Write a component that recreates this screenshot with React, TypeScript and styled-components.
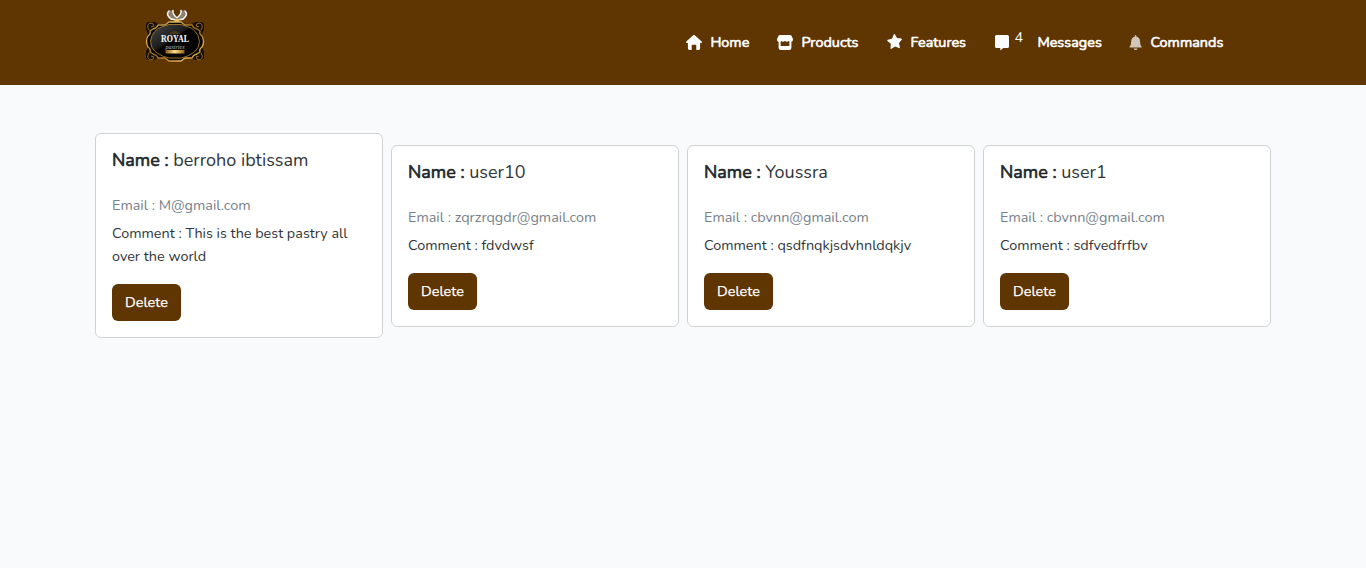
import React from "react";
import styled, { createGlobalStyle } from "styled-components";

const GlobalStyle = createGlobalStyle`
  *, *::before, *::after { box-sizing: border-box; }
  body {
    margin: 0;
    background: #f8fafc;
    color: #30353a;
    font-family: Nunito, Lato, "Open Sans", sans-serif;
    font-size: 14.4px;
    line-height: 1.6;
  }
`;

const Header = styled.header`
  height: 85px;
  padding: 0 142px 0 144px;
  display: flex;
  justify-content: space-between;
  background: #5f3502;
`;

const Brand = styled.a`
  display: block;
  padding-top: 8px;
  line-height: 0;
`;

const Nav = styled.nav`
  display: flex;
  align-items: center;
  height: 86px;
`;

const NavLink = styled.a<{ $width: number }>`
  display: flex;
  align-items: center;
  width: ${(p) => p.$width}px;
  color: #fff;
  text-decoration: none;
`;

const NavIcon = styled.svg<{ $width: number }>`
  width: ${(p) => p.$width}px;
  height: 16px;
  flex: none;
  overflow: visible;
`;

const NavLabel = styled.span`
  margin-left: 8.4px;
  white-space: nowrap;
  -webkit-text-stroke: 0.6px currentColor;
`;

const Count = styled.span`
  width: 8px;
  margin: 0 6.6px 10px 5.400px;
`;

const Cards = styled.main`
  display: flex;
  align-items: center;
  gap: 8px;
  padding: 48.25px 95px 0;
`;

const Card = styled.article`
  width: 288px;
  padding: 16px;
  border: 1px solid #d0d2d4;
  border-radius: 6px;
  background: #fff;
`;

const Title = styled.h5`
  margin: 0 0 25.3px;
  font-size: 18px;
  font-weight: 400;
  line-height: 21.6px;
  white-space: nowrap;
`;

const Strong = styled.span`
  color: #212529;
  -webkit-text-stroke: 0.6px currentColor;
`;

const Email = styled.h6`
  margin: 0 0 7.7px;
  color: #78818a;
  font-size: 14.4px;
  font-weight: 400;
  line-height: 17.28px;
`;

const Comment = styled.p`
  margin: 0 0 16px;
`;

const DeleteButton = styled.button`
  display: block;
  width: 69px;
  height: 37px;
  padding: 0;
  border: 0;
  border-radius: 6px;
  background: #5f3502;
  color: #fff;
  font: inherit;
  -webkit-text-stroke: 0.25px currentColor;
`;

const Logo = () => (
  <svg width="62" height="56" viewBox="0 0 62 56" role="img" aria-label="Royal Pastries">
    <defs>
      <linearGradient id="gold" x1="0" y1="0" x2="1" y2="1">
        <stop offset="0" stopColor="#8b5d1d" />
        <stop offset=".25" stopColor="#e0b65b" />
        <stop offset=".5" stopColor="#996316" />
        <stop offset=".8" stopColor="#e2b254" />
        <stop offset="1" stopColor="#8e5d22" />
      </linearGradient>
      <linearGradient id="bar">
        <stop offset="0" stopColor="#8a5a16" />
        <stop offset=".5" stopColor="#ffe08c" />
        <stop offset="1" stopColor="#94601a" />
      </linearGradient>
      <linearGradient id="onyx" x1="0" y1="0" x2="1" y2="1">
        <stop offset="0" stopColor="#4a4a4a" />
        <stop offset=".42" stopColor="#1b1b1b" />
        <stop offset=".46" stopColor="#050505" />
      </linearGradient>
    </defs>
    <path d="M26 2.5q-3 0-3 3.5 1 5 5 6h4.500l-1-3-3-4q0-2 2-2.500zM39.500 2.500q3.500 0 3.500 3.500-1 5-4.500 6H33l1.500-3 3-4q0-2-2-2.500z" fill="#8d8170" />
    <path d="M25 3q-3 3 0 6 2 3 5.500 2.500M41 3q3 3 0 6-2 3-5 2.500M29 2.500q-1 3 4 7.500M37 2.500q1 3-4 7.500" fill="none" stroke="#f7f5f2" strokeWidth="1.5" strokeLinecap="round" />
    <path d="M31 11h4l1 3h-6z" fill="#e8bf68" />
    <path d="M4 14h7l3 2h7l5-2h11l5 2h6l3-2h7l2 2v5l-2 5q3 7 0 13l2 5v6l-2 2h-7l-4-2h-6l-5 2H25l-5-2h-6l-4 2H4l-2-2v-6l2-5q-3-6 0-13l-2-5v-5z" fill="#130f0b" />
    <path d="M5 22q-3-5 1-7 4 0 4 3l-3 1M57 22q3-5-1-7-4 0-4 3l3 1M5 45q-3 5 1 7 4 0 4-3l-3-1M57 45q3 5-1 7-4 0-4-3l3-1" fill="none" stroke="#9a6a26" strokeWidth="1" />
    <path d="M25 14h12l4 3h7q1 3 5 4l3 2q-1 3 2 5 3 6 0 11-3 2-2 5l-3 2q-4 1-5 4h-7l-4 3H25l-4-3h-7q-1-3-5-4l-3-2q1-3-2-5-3-6 0-11 3-2 2-5l3-2q4-1 5-4h7z" fill="#050505" stroke="url(#gold)" strokeWidth="1.3" />
    <path d="M25 16.500h12q7 2 11 4 4 3 6 7 3 6 0 12-2 4-6 6-4 3-11 4.500H25q-7-1.500-11-4.500-4-2-6-6-3-6 0-12 2-4 6-7 4-2 11-4z" fill="url(#onyx)" stroke="#b88430" strokeWidth=".8" />
    <path d="M26 25.200h10M28.500 24h5" stroke="#725016" strokeWidth=".8" />
    <text x="17" y="33.7" textLength="28" lengthAdjust="spacingAndGlyphs" fill="#fff" fontFamily="Liberation Serif, serif" fontSize="9.5" fontWeight="700">ROYAL</text>
    <text x="21.5" y="40.5" textLength="19" lengthAdjust="spacingAndGlyphs" fill="#b9b6b0" fontFamily="Liberation Serif, serif" fontSize="6.5" fontStyle="italic">pastries</text>
    <path d="M21.500 42h19v3.500h-19z" fill="url(#bar)" />
  </svg>
);

const shapes: Record<string, React.ReactNode> = {
  home: <path d="M7.200.3q.8-.6 1.600 0l6.900 6.100q.6.600.2 1.100-.2.400-.8.400h-1v5.400q0 1.600-1.500 1.600h-2.300V10.500q0-.8-.8-.8h-3q-.8 0-.8.800v4.400H3.400q-1.500 0-1.500-1.600V7.900h-1q-.6 0-.8-.4-.4-.5.2-1.100z" />,
  store: (
    <>
      <path d="M3 0h10q1 0 1.300.6L15.800 3.500q.7 3-1.600 3.300-1.600.2-2.500-.9-1.600 1.500-3.700 0-2.100 1.500-3.700 0-.9 1.100-2.500.9Q-.5 6.500.2 3.500L1.700.6Q2 0 3 0z" />
      <path fillRule="evenodd" d="M1.600 6h2v5h8.800V6h2v6.700q0 2.300-2.300 2.300H3.900q-2.300 0-2.300-2.300z" />
    </>
  ),
  star: <path d="M6.700-.4q.7-1 1.300 0l2 3.500 4.300.5q1.100.2.400 1.200l-2.700 3.200.9 4.300q.1 1.100-.9.800l-3.900-1.600-3.700 2.300q-.9.500-.9-.6l.3-4.500L.5 6q-.8-.9.300-1.200l4.200-1z" />,
  message: <path d="M1.600 0h10.800Q14 0 14 1.600v9.800q0 1.700-1.600 1.700H8.300L6 15q-.7.500-.7-.3v-1.600H1.600Q0 13.100 0 11.400V1.600Q0 0 1.600 0z" />,
  bell: <path d="M5.900.8q0-.8.700-.8t.7.800v.7q3.100.7 3.700 4.200l.3 3.600q.2 1.200 1.400 2.500.5.800-.5.800H1q-1 0-.5-.8 1.200-1.300 1.400-2.500l.3-3.600Q2.800 2.200 5.900 1.500zM4.700 13.400h3.800q-.3 1.600-1.900 1.600t-1.900-1.600z" />,
};

const links = [
  { icon: "home", iconWidth: 16, label: "Home", width: 91 },
  { icon: "store", iconWidth: 16, label: "Products", width: 110 },
  { icon: "star", iconWidth: 15, label: "Features", width: 108 },
  { icon: "message", iconWidth: 14, label: "Messages", width: 134, count: 4 },
  { icon: "bell", iconWidth: 13, label: "Commands", width: 95 },
];

const messages = [
  { name: "berroho ibtissam", email: "M@gmail.com", comment: "This is the best pastry all over the world" },
  { name: "user10", email: "zqrzrqgdr@gmail.com", comment: "fdvdwsf" },
  { name: "Youssra", email: "cbvnn@gmail.com", comment: "qsdfnqkjsdvhnldqkjv" },
  { name: "user1", email: "cbvnn@gmail.com", comment: "sdfvedfrfbv" },
];

export default function App() {
  return (
    <>
      <GlobalStyle />
      <Header>
        <Brand><Logo /></Brand>
        <Nav>
          {links.map((link) => (
            <NavLink key={link.label} $width={link.width}>
              <NavIcon
                $width={link.iconWidth}
                viewBox={`0 0 ${link.iconWidth} 16`}
                fill={link.icon === "bell" ? "#d2c6b8" : "#fff"}
              >
                {shapes[link.icon]}
              </NavIcon>
              {link.count && <Count>{link.count}</Count>}
              <NavLabel>{link.label}</NavLabel>
            </NavLink>
          ))}
        </Nav>
      </Header>
      <Cards>
        {messages.map((m) => (
          <Card key={m.name}>
            <Title><Strong>Name : </Strong>{m.name}</Title>
            <Email>Email : {m.email}</Email>
            <Comment>Comment : {m.comment}</Comment>
            <DeleteButton>Delete</DeleteButton>
          </Card>
        ))}
      </Cards>
    </>
  );
}
